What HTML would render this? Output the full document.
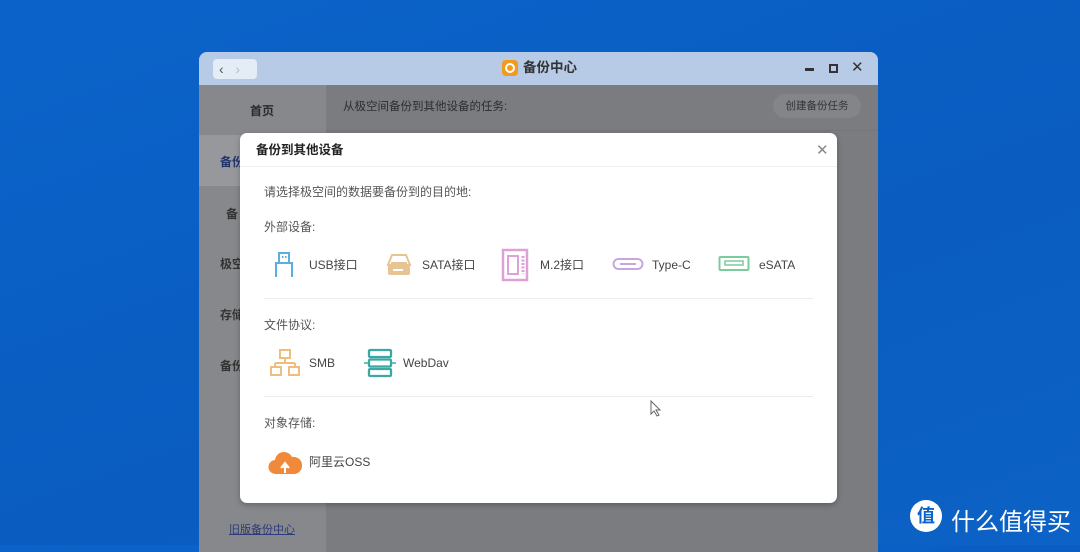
<!DOCTYPE html><html><head><meta charset="utf-8"><style>
*{margin:0;padding:0;box-sizing:border-box}
body{width:1080px;height:545px;overflow:hidden;position:relative;font-family:"Liberation Sans","Noto Sans CJK SC",sans-serif;background:linear-gradient(160deg,#0b63c9 0%,#0a5cc0 60%,#0c62c6 100%)}
.abs{position:absolute}
.win{left:199px;top:52px;width:679px;height:500px;border-radius:8px 8px 0 0;overflow:hidden;background:#7a7c80}
.tb{left:0;top:0;width:679px;height:33px;background:#b7cbe6}
.side{left:0;top:33px;width:127px;height:470px;background:#86888c}
.dlg{left:240px;top:133px;width:597px;height:370px;background:#fff;border-radius:7px;box-shadow:0 2px 6px rgba(0,0,0,.25)}
.t{font-size:12px;line-height:16px;color:#555;position:absolute;white-space:nowrap}
.lbl{font-size:12px;line-height:16px;color:#444;position:absolute;white-space:nowrap}
.hr{position:absolute;left:24px;width:549px;height:1px;background:#ececec}
</style></head><body>
<div class="abs win">
 <div class="abs tb">
  <div class="abs" style="left:14px;top:7px;width:44px;height:20px;background:#e4ecf6;border-radius:4px;font-size:14px;color:#555;line-height:20px;padding-left:6px">&#x2039;&nbsp;&nbsp;&nbsp;<span style="color:#bbb">&#x203A;</span></div>
  <div class="abs" style="left:303px;top:8px;width:16px;height:16px;border-radius:4px;background:#f39a1c"><div style="margin:3px;width:10px;height:10px;border:2px solid #fff;border-radius:50%"></div></div>
  <div class="abs" style="left:324px;top:7px;font-size:13.5px;line-height:18px;font-weight:bold;color:#333">备份中心</div>
  <div class="abs" style="left:606px;top:16px;width:9px;height:2.5px;background:#333"></div>
  <div class="abs" style="left:630px;top:12px;width:9px;height:9px;border:2px solid #333"></div>
  <div class="abs" style="left:652px;top:6px;font-size:15px;color:#333">✕</div>
 </div>
 <div class="abs side"></div>
 <div class="abs" style="left:0;top:83px;width:127px;height:51px;background:#96989c"></div>
 <div class="abs" style="left:51px;top:50px;font-size:12px;font-weight:bold;color:#2a2a2a">首页</div>
 <div class="abs" style="left:21px;top:101px;font-size:12px;font-weight:bold;color:#24356e">备份</div>
 <div class="abs" style="left:27px;top:153px;font-size:12px;font-weight:bold;color:#333">备</div>
 <div class="abs" style="left:21px;top:203px;font-size:12px;font-weight:bold;color:#333">极空</div>
 <div class="abs" style="left:21px;top:254px;font-size:12px;font-weight:bold;color:#333">存储</div>
 <div class="abs" style="left:21px;top:305px;font-size:12px;font-weight:bold;color:#333">备份</div>
 <div class="abs" style="left:30px;top:469px;font-size:11px;color:#2b3a78;text-decoration:underline">旧版备份中心</div>
 <div class="abs" style="left:127px;top:78px;width:552px;height:1px;background:#74767a"></div>
 <div class="abs" style="left:144px;top:46px;font-size:11.5px;color:#2d2d2d">从极空间备份到其他设备的任务:</div>
 <div class="abs" style="left:574px;top:42px;width:88px;height:24px;border-radius:12px;background:#838589;font-size:10.5px;color:#333;text-align:center;line-height:24px">创建备份任务</div>
</div>
<div class="abs dlg">
 <div class="abs" style="left:16px;top:9px;font-size:12.5px;line-height:17px;font-weight:bold;color:#222">备份到其他设备</div>
 <div class="abs" style="left:576px;top:8px;font-size:15px;color:#888">✕</div>
 <div class="abs" style="left:0;top:33px;width:597px;height:1px;background:#eee"></div>
 <div class="t" style="left:24px;top:51px">请选择极空间的数据要备份到的目的地:</div>
 <div class="t" style="left:24px;top:86px">外部设备:</div>
 <svg class="abs" style="left:30px;top:117px" width="28" height="30" viewBox="0 0 28 30"><path d="M6 27V13h16v14M9 13V3h10v10" fill="none" stroke="#5aaee0" stroke-width="2"/><rect x="12" y="6" width="1.5" height="2" fill="#5aaee0"/><rect x="15" y="6" width="1.5" height="2" fill="#5aaee0"/></svg>
 <div class="lbl" style="left:69px;top:124px">USB接口</div>
 <svg class="abs" style="left:145px;top:118px" width="28" height="28" viewBox="0 0 28 28"><path d="M7 4h14l4 10H3z" fill="none" stroke="#e7c493" stroke-width="2"/><rect x="3" y="14" width="22" height="10" rx="2" fill="#e7c493"/><rect x="8" y="18" width="10" height="2" fill="#fff"/><path d="M6 12h16" stroke="#e7c493" stroke-width="2"/></svg>
 <div class="lbl" style="left:182px;top:124px">SATA接口</div>
 <svg class="abs" style="left:261px;top:115px" width="30" height="34" viewBox="0 0 30 34"><rect x="2" y="2" width="24" height="30" fill="none" stroke="#dda1d8" stroke-width="2.5"/><rect x="7" y="8" width="10" height="18" fill="none" stroke="#dda1d8" stroke-width="2"/><path d="M22 8v18" stroke="#dda1d8" stroke-width="3" stroke-dasharray="2 1.5"/></svg>
 <div class="lbl" style="left:300px;top:124px">M.2接口</div>
 <svg class="abs" style="left:372px;top:124px" width="32" height="14" viewBox="0 0 32 14"><rect x="1.5" y="2" width="29" height="10" rx="5" fill="none" stroke="#c6a8de" stroke-width="2"/><rect x="8" y="6" width="16" height="2" fill="#c6a8de"/></svg>
 <div class="lbl" style="left:412px;top:124px">Type-C</div>
 <svg class="abs" style="left:478px;top:122px" width="32" height="18" viewBox="0 0 32 18"><rect x="1.5" y="2" width="29" height="13" rx="1" fill="none" stroke="#7dcb9c" stroke-width="2"/><path d="M7 6h18v4H7z" fill="none" stroke="#7dcb9c" stroke-width="1.5"/></svg>
 <div class="lbl" style="left:519px;top:124px">eSATA</div>
 <div class="hr" style="top:165px"></div>
 <div class="t" style="left:24px;top:184px">文件协议:</div>
 <svg class="abs" style="left:30px;top:215px" width="30" height="30" viewBox="0 0 30 30"><rect x="10" y="2" width="10" height="8" fill="none" stroke="#efbd7d" stroke-width="2"/><path d="M15 10v5M5 15h20M5 15v5M25 15v5" fill="none" stroke="#efbd7d" stroke-width="2"/><rect x="1" y="19" width="10" height="8" fill="none" stroke="#efbd7d" stroke-width="2"/><rect x="19" y="19" width="10" height="8" fill="none" stroke="#efbd7d" stroke-width="2"/></svg>
 <div class="lbl" style="left:69px;top:222px">SMB</div>
 <svg class="abs" style="left:123px;top:215px" width="34" height="30" viewBox="0 0 34 30"><rect x="6" y="2" width="22" height="7" rx="1" fill="none" stroke="#3aa9a4" stroke-width="2.3"/><rect x="6" y="11.5" width="22" height="7" rx="1" fill="none" stroke="#3aa9a4" stroke-width="2.3"/><rect x="6" y="21" width="22" height="7" rx="1" fill="none" stroke="#3aa9a4" stroke-width="2.3"/><path d="M1 15h5M28 15h5" stroke="#3aa9a4" stroke-width="1.5"/></svg>
 <div class="lbl" style="left:163px;top:222px">WebDav</div>
 <div class="hr" style="top:263px"></div>
 <div class="t" style="left:24px;top:282px">对象存储:</div>
 <svg class="abs" style="left:28px;top:315px" width="34" height="28" viewBox="0 0 34 28"><path d="M8 26a7 7 0 0 1-1-14 9 9 0 0 1 17-3 7 7 0 0 1 3 17z" fill="#f08a3a"/><path d="M17 25v-8M13 20l4-5 4 5" fill="#fff" stroke="#fff" stroke-width="2"/></svg>
 <div class="lbl" style="left:69px;top:321px">阿里云OSS</div>
</div>
<svg class="abs" style="left:650px;top:400px" width="12" height="17" viewBox="0 0 12 17"><path d="M1 1v13l3-3 3 5 2-1-3-5h4z" fill="#fff" stroke="#666" stroke-width="1"/></svg>
<div class="abs" style="left:910px;top:500px;width:32px;height:32px;border-radius:50%;background:#fff;color:#0b63c9;font-size:18px;font-weight:bold;text-align:center;line-height:32px">值</div>
<div class="abs" style="left:951px;top:502px;font-size:24px;color:#fff">什么值得买</div>
</body></html>
